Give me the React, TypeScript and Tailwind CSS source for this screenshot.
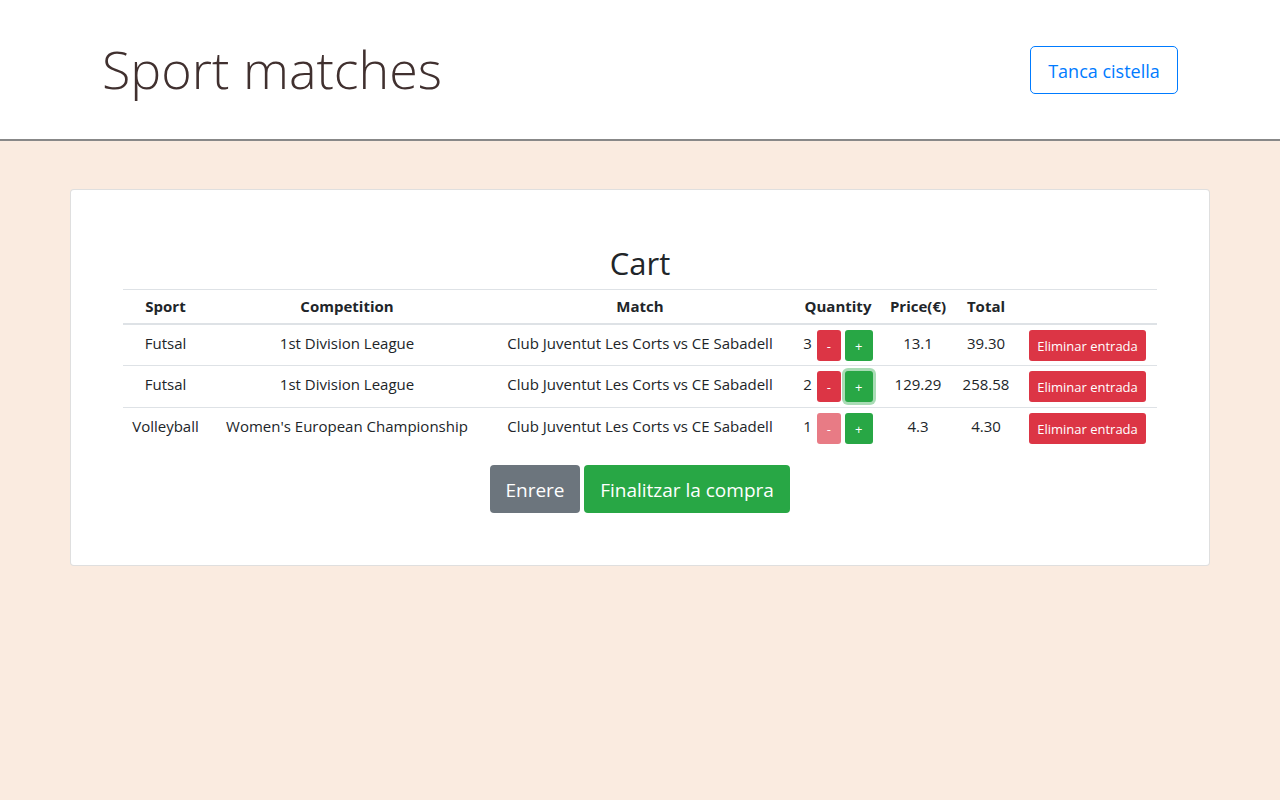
import React from 'react';

type Entry = {
  sport: string;
  competition: string;
  match: string;
  qty: number;
  price: string;
  total: string;
};

const entries: Entry[] = [
  { sport: 'Futsal', competition: '1st Division League', match: 'Club Juventut Les Corts vs CE Sabadell', qty: 3, price: '13.1', total: '39.30' },
  { sport: 'Futsal', competition: '1st Division League', match: 'Club Juventut Les Corts vs CE Sabadell', qty: 2, price: '129.29', total: '258.58' },
  { sport: 'Volleyball', competition: "Women's European Championship", match: 'Club Juventut Les Corts vs CE Sabadell', qty: 1, price: '4.3', total: '4.30' },
];

const font = { fontFamily: '"Open Sans", "Noto Sans", sans-serif' };

const App = () => {
  return (
    <div className="min-h-[800px] bg-[#faebe0] text-[#212529]" style={font}>
      <header className="bg-white border-b-2 border-[#888888] h-[141px] px-[102px] flex items-center justify-between">
        <h1 className="text-[52px] font-light text-[#40302f] leading-none -mt-[1px]">Sport matches</h1>
        <button className="h-[48px] w-[148px] pt-[3px] text-[18px] text-[#007bff] border border-[#007bff] rounded-[5px] bg-white">
          Tanca cistella
        </button>
      </header>

      <main className="px-[70px] pt-[48px]">
        <div className="bg-white border border-black/[0.125] rounded-[4px] px-[52px] pt-[54px] pb-[52px]">
          <h2 className="text-[31px] leading-[38px] text-center mb-[7px]">Cart</h2>
          <table className="w-full table-fixed border-collapse text-[15px]">
            <colgroup>
              <col className="w-[85px]" />
              <col className="w-[278px]" />
              <col className="w-[308px]" />
              <col className="w-[88px]" />
              <col className="w-[72px]" />
              <col className="w-[64px]" />
              <col className="w-[139px]" />
            </colgroup>
            <thead>
              <tr className="border-t border-[#dee2e6] border-b-2">
                <th className="py-[5px] font-bold text-center whitespace-nowrap">Sport</th>
                <th className="py-[5px] font-bold text-center">Competition</th>
                <th className="py-[5px] font-bold text-center">Match</th>
                <th className="py-[5px] font-bold text-center">Quantity</th>
                <th className="py-[5px] font-bold text-center whitespace-nowrap">Price(€)</th>
                <th className="py-[5px] font-bold text-center">Total</th>
                <th className="py-[5px]"></th>
              </tr>
            </thead>
            <tbody>
              {entries.map((e, i) => (
                <tr key={i} className={i > 0 ? 'border-t border-[#dee2e6]' : ''}>
                  <td className="px-1 pt-[5px] pb-[4.6px] text-center align-top leading-[26px] whitespace-nowrap">{e.sport}</td>
                  <td className="px-1 pt-[5px] pb-[4.6px] text-center align-top leading-[26px] whitespace-nowrap">{e.competition}</td>
                  <td className="px-1 pt-[5px] pb-[4.6px] text-center align-top leading-[26px] whitespace-nowrap">{e.match}</td>
                  <td className="px-1 pt-[5px] pb-[4.6px] text-center align-top whitespace-nowrap">
                    <div className="flex items-start justify-center gap-[4px]">
                      <span className="leading-[26px] mr-[1px]">{e.qty}</span>
                      <button
                        className={
                          'h-[31px] w-[24px] pt-[3px] rounded-[3px] bg-[#dc3545] text-white text-[13px] ' +
                          (e.qty === 1 ? 'opacity-65' : '')
                        }
                      >
                        -
                      </button>
                      <button
                        className={
                          'h-[31px] w-[28px] pt-[3px] rounded-[3px] bg-[#28a745] text-white text-[13px] ' +
                          (i === 1 ? 'shadow-[0_0_0_3px_rgba(40,167,69,0.4)]' : '')
                        }
                      >
                        +
                      </button>
                    </div>
                  </td>
                  <td className="px-1 pt-[5px] pb-[4.6px] text-center align-top leading-[26px]">{e.price}</td>
                  <td className="px-1 pt-[5px] pb-[4.6px] text-center align-top leading-[26px]">{e.total}</td>
                  <td className="px-1 pt-[5px] pb-[4.6px] text-center align-top">
                    <button className="h-[31px] w-[117px] pt-[3px] rounded-[3px] bg-[#dc3545] text-white text-[13px] whitespace-nowrap">
                      Eliminar entrada
                    </button>
                  </td>
                </tr>
              ))}
            </tbody>
          </table>

          <div className="flex justify-center gap-[4px] mt-[17px]">
            <button className="h-[48px] w-[90px] pt-[2px] rounded-[4px] bg-[#6c757d] text-white text-[19px]">Enrere</button>
            <button className="h-[48px] w-[206px] pt-[2px] rounded-[4px] bg-[#28a745] text-white text-[19px] whitespace-nowrap">
              Finalitzar la compra
            </button>
          </div>
        </div>
      </main>
    </div>
  );
};

export default App;
